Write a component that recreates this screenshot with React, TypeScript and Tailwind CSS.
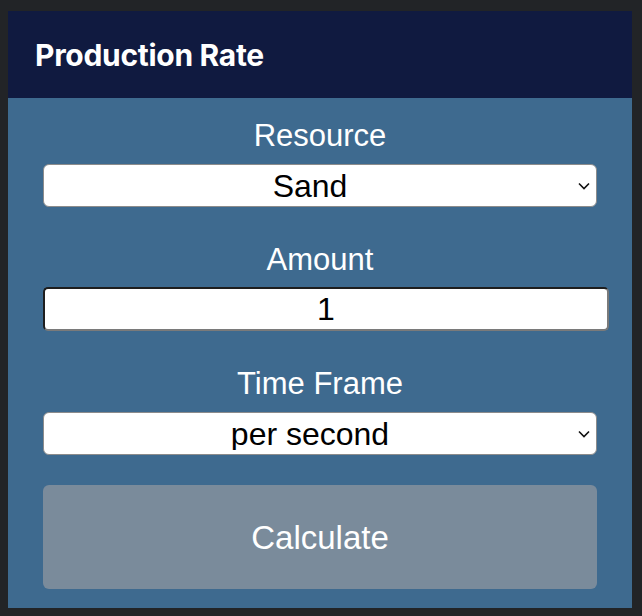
import { useState } from 'react';

function Chevron() {
  return (
    <svg
      width="12"
      height="8"
      viewBox="0 0 12 8"
      className="pointer-events-none absolute right-[7px] top-1/2 -translate-y-1/2"
    >
      <path d="M1 1.5 L6 6.5 L11 1.5" fill="none" stroke="#111" strokeWidth="1.6" />
    </svg>
  );
}

function Field({
  label,
  value,
  options,
  onChange,
}: {
  label: string;
  value: string;
  options: string[];
  onChange: (v: string) => void;
}) {
  return (
    <div className="flex flex-col">
      <label className="pt-[2px] text-center text-[31px] leading-[34px] text-white">{label}</label>
      <div className="relative mt-[11px]">
        <select
          value={value}
          onChange={(e) => onChange(e.target.value)}
          className="h-[43px] w-full appearance-none rounded-[6px] border border-[#8c8c8c] bg-white pr-[20px] text-center text-[32px] leading-none text-black outline-none [text-align-last:center]"
        >
          {options.map((o) => (
            <option key={o}>{o}</option>
          ))}
        </select>
        <Chevron />
      </div>
    </div>
  );
}

export default function App() {
  const [resource, setResource] = useState('Sand');
  const [amount, setAmount] = useState('1');
  const [frame, setFrame] = useState('per second');

  return (
    <div
      className="min-h-[616px] bg-[#222427] pb-[8px] pl-[8px] pr-[10px] pt-[11px]"
      style={{ fontFamily: '"Liberation Sans", Arial, sans-serif' }}
    >
      <div className="flex flex-col">
        <div className="flex h-[87px] items-center bg-[#101a40] px-[27px]">
          <h1
            className="pt-[2px] text-[30px] font-bold tracking-[-0.3px] text-white"
            style={{ fontFamily: 'Inter, "Liberation Sans", sans-serif' }}
          >
            Production Rate
          </h1>
        </div>
        <div className="flex flex-col bg-[#3e6a8f] pb-[19px] pl-[35px] pr-[35px] pt-[19px]">
          <Field
            label="Resource"
            value={resource}
            options={['Sand', 'Stone', 'Wood', 'Iron']}
            onChange={setResource}
          />
          <div className="mt-[34px] flex flex-col">
            <label className="pt-[2px] text-center text-[31px] leading-[34px] text-white">Amount</label>
            <input
              value={amount}
              onChange={(e) => setAmount(e.target.value)}
              className="mt-[10px] h-[44px] w-[566px] rounded-[5px] border-2 border-b-[#7a7a7a] border-l-[#1e1e1e] border-r-[#7a7a7a] border-t-[#1e1e1e] bg-white text-center text-[32px] text-black outline-none"
            />
          </div>
          <div className="mt-[34px]">
            <Field
              label="Time Frame"
              value={frame}
              options={['per second', 'per minute', 'per hour']}
              onChange={setFrame}
            />
          </div>
          <button className="mt-[30px] h-[104px] w-full rounded-[6px] bg-[#7a8b9b] pt-[2px] text-[33px] text-white">
            Calculate
          </button>
        </div>
      </div>
    </div>
  );
}
